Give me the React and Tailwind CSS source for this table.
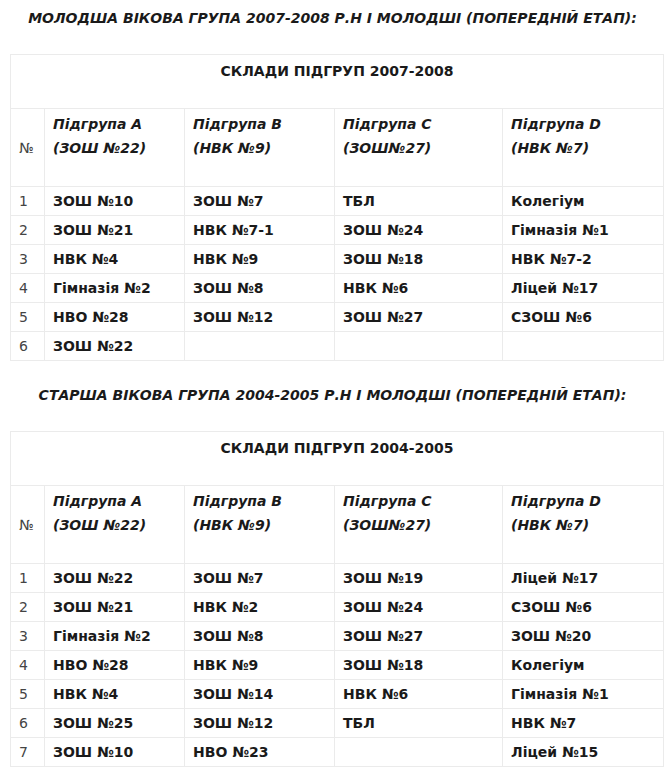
import React from "react";

const groupsJunior = {
  year: "2007-2008",
  heads: [
    ["Підгрупа A", "(ЗОШ №22)"],
    ["Підгрупа B", "(НВК №9)"],
    ["Підгрупа C", "(ЗОШ№27)"],
    ["Підгрупа D", "(НВК №7)"],
  ],
  rows: [
    ["ЗОШ №10", "ЗОШ №7", "ТБЛ", "Колегіум"],
    ["ЗОШ №21", "НВК №7-1", "ЗОШ №24", "Гімназія №1"],
    ["НВК №4", "НВК №9", "ЗОШ №18", "НВК №7-2"],
    ["Гімназія №2", "ЗОШ №8", "НВК №6", "Ліцей №17"],
    ["НВО №28", "ЗОШ №12", "ЗОШ №27", "СЗОШ №6"],
    ["ЗОШ №22", "", "", ""],
  ],
};

const groupsSenior = {
  year: "2004-2005",
  heads: groupsJunior.heads,
  rows: [
    ["ЗОШ №22", "ЗОШ №7", "ЗОШ №19", "Ліцей №17"],
    ["ЗОШ №21", "НВК №2", "ЗОШ №24", "СЗОШ №6"],
    ["Гімназія №2", "ЗОШ №8", "ЗОШ №27", "ЗОШ №20"],
    ["НВО №28", "НВК №9", "ЗОШ №18", "Колегіум"],
    ["НВК №4", "ЗОШ №14", "НВК №6", "Гімназія №1"],
    ["ЗОШ №25", "ЗОШ №12", "ТБЛ", "НВК №7"],
    ["ЗОШ №10", "НВО №23", "", "Ліцей №15"],
  ],
};

function GroupTable({ data }) {
  return (
    <table className="ml-[10px] w-[654px] border-collapse table-fixed">
      <colgroup>
        <col className="w-[34px]" />
        <col className="w-[140px]" />
        <col className="w-[150px]" />
        <col className="w-[168px]" />
        <col />
      </colgroup>
      <tbody>
        <tr>
          <td
            colSpan={5}
            className="h-[54px] border border-[#ebebeb] px-2 pt-[4px] align-top text-center font-bold text-[#1a1a1a]"
          >
            СКЛАДИ ПІДГРУП {data.year}
          </td>
        </tr>
        <tr>
          <td className="h-[78px] border border-[#ebebeb] px-2 align-middle text-[#444]">
            №
          </td>
          {data.heads.map((h, i) => (
            <td
              key={i}
              className="h-[78px] border border-[#ebebeb] px-2 pt-[3px] align-top font-bold italic text-[#1a1a1a]"
            >
              {h[0]}
              <br />
              {h[1]}
            </td>
          ))}
        </tr>
        {data.rows.map((row, i) => (
          <tr key={i}>
            <td className="h-[29px] border border-[#ebebeb] px-2 py-0 text-[#444]">
              {i + 1}
            </td>
            {row.map((c, j) => (
              <td
                key={j}
                className="h-[29px] border border-[#ebebeb] px-2 py-0 font-bold text-[#1a1a1a]"
              >
                {c}
              </td>
            ))}
          </tr>
        ))}
      </tbody>
    </table>
  );
}

export default function App() {
  return (
    <div className="w-[665px] min-h-[784px] bg-white font-['DejaVu_Sans',Verdana,sans-serif] text-[14px] leading-[24px] text-[#1a1a1a]">
      <p className="pt-[6px] pb-[24px] text-center font-bold italic">
        МОЛОДША ВІКОВА ГРУПА 2007-2008 Р.Н І МОЛОДШІ (ПОПЕРЕДНІЙ ЕТАП):
      </p>
      <GroupTable data={groupsJunior} />
      <p className="pt-[22px] pb-[24px] text-center font-bold italic">
        СТАРША ВІКОВА ГРУПА 2004-2005 Р.Н І МОЛОДШІ (ПОПЕРЕДНІЙ ЕТАП):
      </p>
      <GroupTable data={groupsSenior} />
    </div>
  );
}
